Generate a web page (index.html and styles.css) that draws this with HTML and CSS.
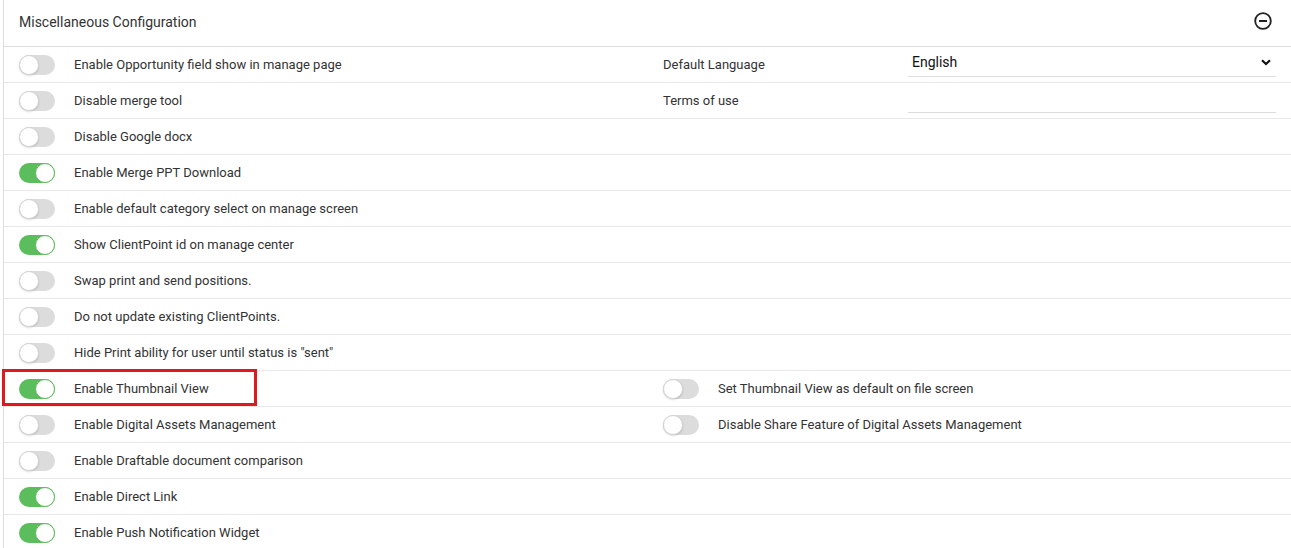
FILE: index.html
```html
<!DOCTYPE html>
<html lang="en">
<head>
  <meta charset="UTF-8">
  <meta name="viewport" content="width=device-width, initial-scale=1.0">
  <title>Miscellaneous Configuration</title>
  <link rel="stylesheet" href="styles.css">
</head>
<body>
  <div class="panel">
    <div class="panel-header">
      <span class="panel-title">Miscellaneous Configuration</span>
      <svg class="collapse-icon" width="18" height="18" viewBox="0 0 18 18">
        <circle cx="9" cy="9" r="7.8" fill="none" stroke="#222" stroke-width="1.8"/>
        <line x1="5" y1="9" x2="13" y2="9" stroke="#222" stroke-width="2"/>
      </svg>
    </div>

    <div class="row">
      <div class="cell"><span class="toggle"></span><span class="label">Enable Opportunity field show in manage page</span></div>
      <div class="cell">
        <span class="field-label">Default Language</span>
        <div class="field select">
          <span>English</span>
          <svg width="10" height="7" viewBox="0 0 10 7"><path d="M1 1.2 L5 5 L9 1.2" fill="none" stroke="#111" stroke-width="2.2"/></svg>
        </div>
      </div>
    </div>
    <div class="row">
      <div class="cell"><span class="toggle"></span><span class="label">Disable merge tool</span></div>
      <div class="cell">
        <span class="field-label">Terms of use</span>
        <div class="field"></div>
      </div>
    </div>
    <div class="row">
      <div class="cell"><span class="toggle"></span><span class="label">Disable Google docx</span></div>
      <div class="cell"></div>
    </div>
    <div class="row">
      <div class="cell"><span class="toggle on"></span><span class="label">Enable Merge PPT Download</span></div>
      <div class="cell"></div>
    </div>
    <div class="row">
      <div class="cell"><span class="toggle"></span><span class="label">Enable default category select on manage screen</span></div>
      <div class="cell"></div>
    </div>
    <div class="row">
      <div class="cell"><span class="toggle on"></span><span class="label">Show ClientPoint id on manage center</span></div>
      <div class="cell"></div>
    </div>
    <div class="row">
      <div class="cell"><span class="toggle"></span><span class="label">Swap print and send positions.</span></div>
      <div class="cell"></div>
    </div>
    <div class="row">
      <div class="cell"><span class="toggle"></span><span class="label">Do not update existing ClientPoints.</span></div>
      <div class="cell"></div>
    </div>
    <div class="row">
      <div class="cell"><span class="toggle"></span><span class="label">Hide Print ability for user until status is "sent"</span></div>
      <div class="cell"></div>
    </div>
    <div class="row">
      <div class="cell highlight"><span class="toggle on"></span><span class="label">Enable Thumbnail View</span></div>
      <div class="cell"><span class="toggle"></span><span class="label">Set Thumbnail View as default on file screen</span></div>
    </div>
    <div class="row">
      <div class="cell"><span class="toggle"></span><span class="label">Enable Digital Assets Management</span></div>
      <div class="cell"><span class="toggle"></span><span class="label">Disable Share Feature of Digital Assets Management</span></div>
    </div>
    <div class="row">
      <div class="cell"><span class="toggle"></span><span class="label">Enable Draftable document comparison</span></div>
      <div class="cell"></div>
    </div>
    <div class="row">
      <div class="cell"><span class="toggle on"></span><span class="label">Enable Direct Link</span></div>
      <div class="cell"></div>
    </div>
    <div class="row">
      <div class="cell"><span class="toggle on"></span><span class="label">Enable Push Notification Widget</span></div>
      <div class="cell"></div>
    </div>
  </div>
</body>
</html>
```

FILE: styles.css
```css
body {
  margin: 0;
  font-family: Roboto, "Liberation Sans", sans-serif;
  background-color: #fff;
  color: #333;
  overflow: hidden;
}
.panel {
  margin-left: 3px;
  border-left: 1px solid #ddd;
}
.panel-header {
  height: 47px;
  box-sizing: border-box;
  display: flex;
  align-items: center;
  justify-content: space-between;
  padding: 0 19px 3px 15px;
  border-bottom: 1px solid #ddd;
}
.panel-title {
  font-size: 14px;
  color: #333;
}
.collapse-icon {
  display: block;
  margin-top: -2px;
}
.row {
  display: grid;
  grid-template-columns: 643px 1fr;
  height: 36px;
  box-sizing: border-box;
  border-bottom: 1px solid #e8e8e8;
}
.cell {
  display: flex;
  align-items: center;
  padding-left: 15px;
  position: relative;
}
.cell + .cell {
  padding-left: 16px;
  padding-right: 15px;
}
.label {
  font-size: 13px;
  margin-left: 19px;
}
.toggle {
  position: relative;
  width: 36px;
  height: 20px;
  border-radius: 10px;
  background-color: #dcdcdc;
  flex-shrink: 0;
  margin-top: 1px;
}
.toggle::after {
  content: "";
  position: absolute;
  top: 0;
  left: 0;
  width: 18px;
  height: 18px;
  border-radius: 50%;
  background-color: #fff;
  border: 1px solid #d4d4d4;
  box-shadow: 0 1px 2px rgba(0, 0, 0, 0.15);
}
.toggle.on {
  background-color: #5cbd5c;
}
.toggle.on::after {
  left: 16px;
  border-color: #5cbd5c;
  box-shadow: none;
}
.field-label {
  font-size: 13px;
  width: 245px;
  flex-shrink: 0;
}
.field {
  flex: 1;
  height: 30px;
  box-sizing: border-box;
  border-bottom: 1px solid #ddd;
  align-self: flex-start;
}
.select {
  display: flex;
  align-items: center;
  justify-content: space-between;
  padding: 1px 5px 0 4px;
  font-size: 14px;
  color: #111;
}
.highlight::after {
  content: "";
  position: absolute;
  left: -2px;
  top: -2px;
  width: 255px;
  height: 37px;
  box-sizing: border-box;
  border: 3px solid #e0191f;
}
```
